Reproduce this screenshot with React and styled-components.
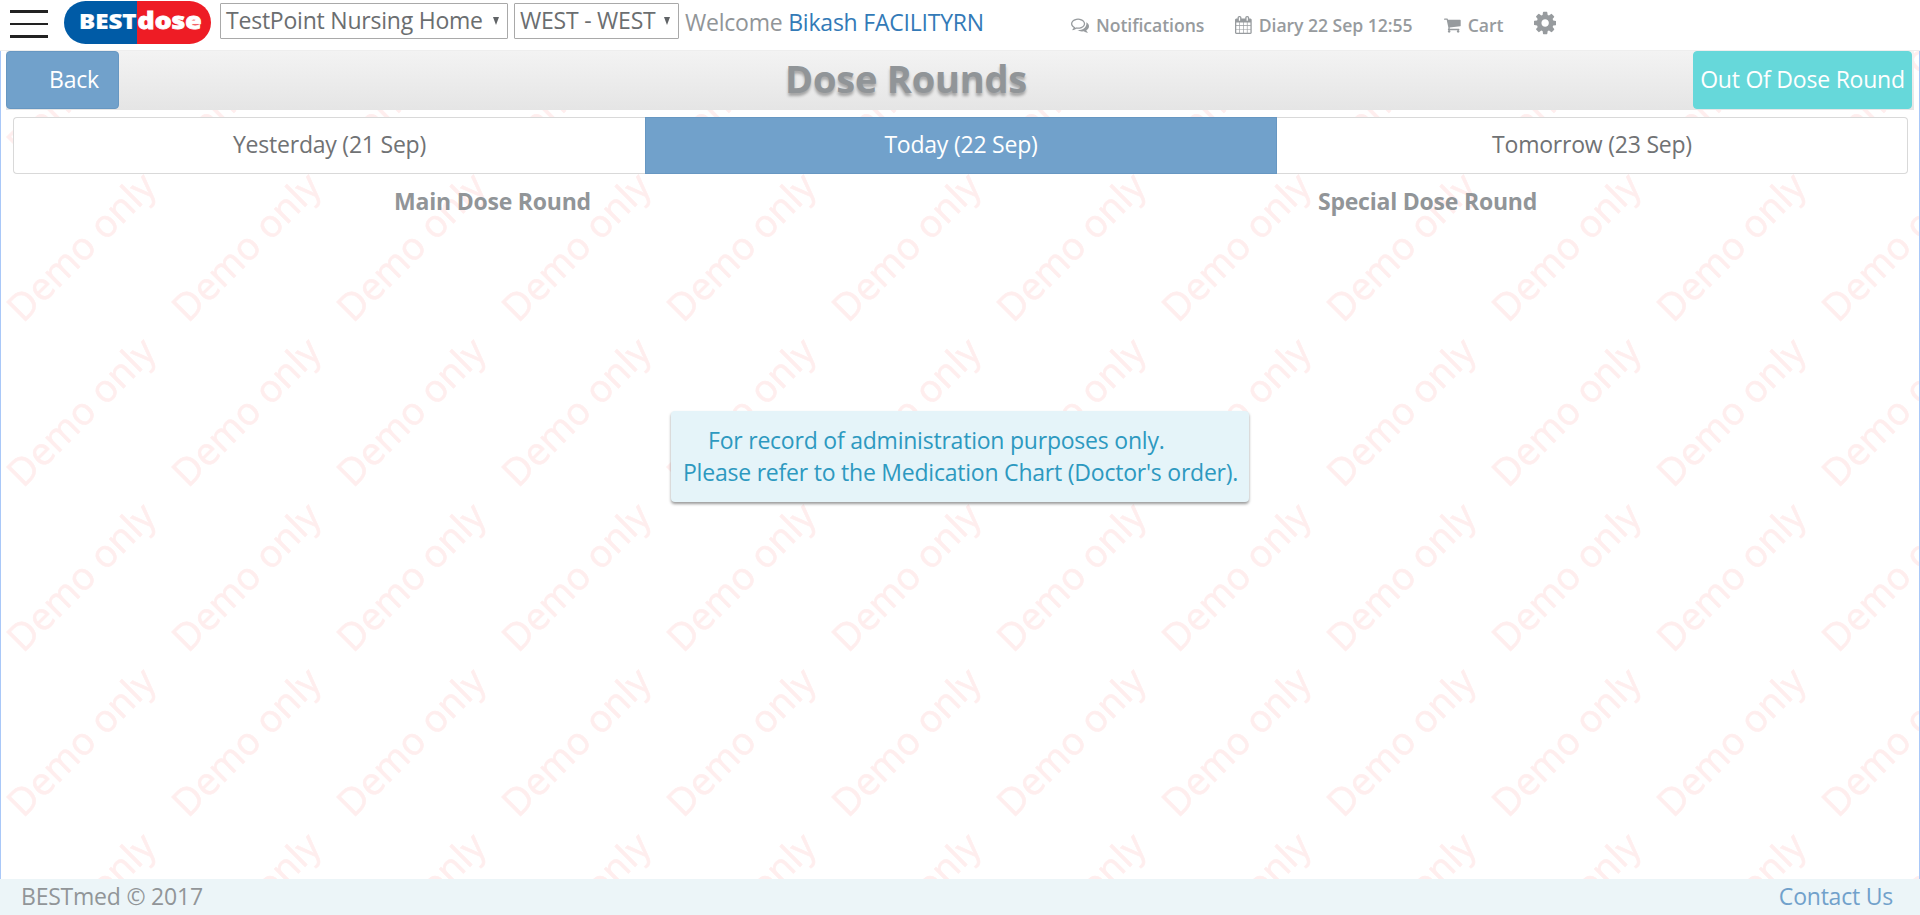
import React from "react";
import styled, { createGlobalStyle } from "styled-components";

const GlobalStyle = createGlobalStyle`
  *, *::before, *::after { box-sizing: border-box; }
  body {
    margin: 0;
    background: #fff;
    color: #919598;
    font: 23px/34px "Open Sans", "Noto Sans", sans-serif;
    letter-spacing: -0.22px;
    overflow: hidden;
  }
`;

const Page = styled.div`
  display: flex;
  flex-direction: column;
  height: 100vh;
`;

const Nav = styled.nav`
  display: flex;
  align-items: flex-start;
  height: 51px;
  flex: none;
  padding-left: 10px;
  background: #fff;
  border-bottom: 1px solid #eee;
`;

const MenuButton = styled.div`
  display: flex;
  flex-direction: column;
  justify-content: space-between;
  width: 38px;
  height: 28px;
  margin: 10px 16px 0 0;
`;

const MenuBar = styled.span`
  height: ${(p) => (p.$thin ? 2 : 3)}px;
  background: #222;
`;

const LogoSvg = styled.svg`
  display: block;
  width: 147px;
  height: 43px;
  margin: 1px 9px 0 0;
  letter-spacing: 0;
`;

const SelectBox = styled.div`
  display: flex;
  align-items: center;
  justify-content: space-between;
  width: ${(p) => p.$width}px;
  height: 36px;
  margin: 3px 6px 0 0;
  padding: 0 8px 2px 5px;
  border: 1px solid #a9a9a9;
  border-radius: 1px;
  color: #6b6e70;
  white-space: nowrap;
`;

const Caret = styled.span`
  width: 0;
  height: 0;
  margin-top: 2px;
  border: solid transparent;
  border-width: 8px 3.5px 0;
  border-top-color: #606366;
`;

const Welcome = styled.div`
  margin: 5px 0 0 0;
  width: 386px;
  white-space: nowrap;
`;

const UserName = styled.a`
  color: #337ab7;
`;

const NavItem = styled.a`
  display: flex;
  align-items: center;
  gap: 7px;
  width: ${(p) => p.$width}px;
  margin-top: 8px;
  font-size: 17.6px;
  font-weight: 600;
  letter-spacing: -0.05px;
  color: #979b9e;
  white-space: nowrap;
`;

const Glyph = styled.svg`
  flex: none;
  display: block;
  height: ${(p) => p.$size}px;
  fill: currentColor;
`;

const SettingsLink = styled.a`
  margin-top: 10px;
  color: #979b9e;
`;

const Main = styled.main`
  position: relative;
  flex: 1;
  min-height: 0;
  padding: 0 5px;
  border: solid #a9c8f8;
  border-width: 0 1px;
`;

const Watermark = styled.svg`
  position: absolute;
  z-index: -1;
  top: -51px;
  left: -1px;
  width: 1920px;
  height: 879px;
  letter-spacing: 0;
`;

const TitleBar = styled.header`
  display: flex;
  align-items: flex-start;
  height: 59px;
  padding-right: 2px;
  background: linear-gradient(#f3f3f3, #e5e5e5);
`;

const ActionButton = styled.button`
  flex: none;
  width: ${(p) => p.$width}px;
  height: 58px;
  padding: 0 0 2px ${(p) => p.$indent ?? 0}px;
  border: 1px solid ${(p) => p.$edge};
  border-radius: 4px;
  background: ${(p) => p.$fill};
  color: #fff;
  font: inherit;
  letter-spacing: inherit;
  white-space: nowrap;
`;

const Title = styled.h1`
  flex: 1;
  margin: 0;
  font-size: 38px;
  line-height: 54px;
  font-weight: 700;
  text-align: center;
  text-shadow: 0 3px 3px rgba(0, 0, 0, 0.3);
`;

const Tabs = styled.div`
  display: grid;
  grid-template-columns: 632px 632px 1fr;
  height: 57px;
  margin: 7px 6px 0 7px;
`;

const Tab = styled.div`
  border: 1px solid ${(p) => (p.$active ? "#6797c2" : "#d9d9d9")};
  border-left-width: ${(p) => (p.$first || p.$active ? 1 : 0)}px;
  border-right-width: ${(p) => (p.$first ? 0 : 1)}px;
  border-radius: ${(p) => (p.$first ? "4px 0 0 4px" : p.$last ? "0 4px 4px 0" : 0)};
  background: ${(p) => (p.$active ? "#71a1cb" : "#fff")};
  color: ${(p) => (p.$active ? "#fff" : "#707274")};
  line-height: 53px;
  text-align: center;
`;

const Rounds = styled.div`
  display: grid;
  grid-template-columns: 1fr 1fr;
  padding: 10px 19px 0;
`;

const RoundHeading = styled.h2`
  margin: 0;
  font-size: 23px;
  line-height: 34px;
  font-weight: 700;
  text-align: center;
`;

const Notice = styled.div`
  position: absolute;
  top: 360px;
  left: 670px;
  width: 578px;
  height: 91px;
  padding: 13px 12px;
  border-radius: 4px;
  background: #e5f4f9;
  box-shadow: 0 2px 3px rgba(0, 0, 0, 0.4);
  color: #2d99c0;
  line-height: 32px;
  white-space: nowrap;
`;

const NoticeLead = styled.div`
  padding-left: 25px;
`;

const Footer = styled.footer`
  display: flex;
  flex: none;
  justify-content: space-between;
  height: 36px;
  padding: 0 27px 0 21px;
  background: #ecf5f8;
`;

const FooterLink = styled.a`
  color: #71a1cb;
`;

const ICONS = {
  comments:
    "M704 384q-153 0-286 52t-211.5 141-78.5 191q0 82 53 158t149 132l97 56-35 84q34-20 62-39l44-31 53 10q78 14 153 14 153 0 286-52t211.5-141 78.5-191-78.5-191-211.5-141-286-52zm0-128q191 0 353.5 68.5t256.5 186.5 94 257-94 257-256.5 186.5-353.5 68.5q-86 0-176-16-124 88-278 128-36 9-86 16h-3q-11 0-20.5-8t-11.5-21q-1-3-1-6.5t.5-6.5 2-6l2.5-5 3.5-5.5 4-5 4.5-5 4-4.5q5-6 23-25t26-29.5 22.5-29 25-38.5 20.5-44q-124-72-195-177t-71-224q0-139 94-257t256.5-186.5 353.5-68.5zm822 1169q10 24 20.5 44t25 38.5 22.5 29 26 29.5 23 25q1 1 4 4.5t4.5 5 4 5 3.5 5.5l2.5 5 2 6 .5 6.5-1 6.5q-3 14-13 22t-22 7q-50-7-86-16-154-40-278-128-90 16-176 16-271 0-472-132 58 4 88 4 161 0 309-45t264-129q125-92 192-212t67-254q0-77-23-152 129 71 204 178t75 230q0 120-71 224.5t-195 176.5z",
  calendar:
    "M192 1664h288v-288h-288v288zm352 0h320v-288h-320v288zm-352-352h288v-320h-288v320zm352 0h320v-320h-320v320zm-352-384h288v-288h-288v288zm736 736h320v-288h-320v288zm-384-736h320v-288h-320v288zm768 736h288v-288h-288v288zm-384-352h320v-320h-320v320zm-352-864v-288q0-13-9.5-22.5t-22.5-9.5h-64q-13 0-22.5 9.5t-9.5 22.5v288q0 13 9.5 22.5t22.5 9.5h64q13 0 22.5-9.5t9.5-22.5zm736 864h288v-320h-288v320zm-384-384h320v-288h-320v288zm384 0h288v-288h-288v288zm32-480v-288q0-13-9.5-22.5t-22.5-9.5h-64q-13 0-22.5 9.5t-9.5 22.5v288q0 13 9.5 22.5t22.5 9.5h64q13 0 22.5-9.5t9.5-22.5zm384-64v1280q0 52-38 90t-90 38h-1408q-52 0-90-38t-38-90v-1280q0-52 38-90t90-38h128v-96q0-66 47-113t113-47h64q66 0 113 47t47 113v96h384v-96q0-66 47-113t113-47h64q66 0 113 47t47 113v96h128q52 0 90 38t38 90z",
  cart:
    "M704 1536q0 52-38 90t-90 38-90-38-38-90 38-90 90-38 90 38 38 90zm896 0q0 52-38 90t-90 38-90-38-38-90 38-90 90-38 90 38 38 90zm128-1088v512q0 24-16.5 42.5t-40.5 21.5l-1044 122q13 60 13 70 0 16-24 64h920q26 0 45 19t19 45-19 45-45 19h-1024q-26 0-45-19t-19-45q0-11 8-31.5t16-36 21.5-40 15.5-29.5l-177-823h-204q-26 0-45-19t-19-45 19-45 45-19h256q16 0 28.5 6.5t19.5 15.5 13 24.5 8 26 5.5 29.5 4.5 26h1201q26 0 45 19t19 45z",
  cog:
    "M1152 896q0-106-75-181t-181-75-181 75-75 181 75 181 181 75 181-75 75-181zm512-109v222q0 12-8 23t-20 13l-185 28q-19 54-39 91 35 50 107 138 10 12 10 25t-9 23q-27 37-99 108t-94 71q-12 0-26-9l-138-108q-44 23-91 38-16 136-29 186-7 28-36 28h-222q-14 0-24.5-8.5t-11.5-21.5l-28-184q-49-16-90-37l-141 107q-10 9-25 9-14 0-25-11-126-114-165-168-7-10-7-23 0-12 8-23 15-21 51-66.5t54-70.5q-27-50-41-99l-183-27q-13-2-21-12.5t-8-23.5v-222q0-12 8-23t19-13l186-28q14-46 39-92-40-57-107-138-10-12-10-24 0-10 9-23 26-36 98.5-107.5t94.5-71.5q13 0 26 10l138 107q44-23 91-38 16-136 29-186 7-28 36-28h222q14 0 24.5 8.5t11.5 21.5l28 184q49 16 90 37l142-107q9-9 24-9 13 0 25 10 129 119 165 170 7 8 7 22 0 12-8 23-15 21-51 66.5t-54 70.5q26 50 41 98l183 28q13 2 21 12.5t8 23.5z",
};

function Icon({ name, size = 18, box = "0 0 1792 1792" }) {
  return (
    <Glyph $size={size} viewBox={box} aria-hidden="true">
      <path d={ICONS[name]} />
    </Glyph>
  );
}

function Logo() {
  return (
    <LogoSvg viewBox="0 0 147 43">
      <clipPath id="pill">
        <rect width="147" height="43" rx="21.5" />
      </clipPath>
      <g clipPath="url(#pill)">
        <rect width="73" height="43" fill="#005ba6" />
        <rect x="73" width="74" height="43" fill="#ee1c25" />
      </g>
      <g fill="#fff" stroke="#fff" fontFamily="Open Sans" fontWeight="800">
        <text x="15" y="28" fontSize="21" strokeWidth="0.2" textLength="57.5" lengthAdjust="spacingAndGlyphs">BEST</text>
        <text x="73.6" y="28" fontSize="23" strokeWidth="0.8" textLength="64" lengthAdjust="spacingAndGlyphs">dose</text>
      </g>
    </LogoSvg>
  );
}

function DemoWatermark() {
  return (
    <Watermark>
      <defs>
        <pattern id="demo" width="165" height="165" patternUnits="userSpaceOnUse">
          <text
            transform="translate(23 158.7) rotate(-45)"
            fontFamily="Open Sans"
            fontSize="37.8"
            fill="#ffeeee"
            stroke="#ffeeee"
            strokeWidth="0.6"
          >
            Demo only
          </text>
        </pattern>
      </defs>
      <rect width="1920" height="879" fill="url(#demo)" />
    </Watermark>
  );
}

export default function App() {
  return (
    <Page>
      <GlobalStyle />
      <Nav>
        <MenuButton>
          <MenuBar />
          <MenuBar $thin />
          <MenuBar />
        </MenuButton>
        <Logo />
        <SelectBox $width={288}>
          TestPoint Nursing Home
          <Caret />
        </SelectBox>
        <SelectBox $width={165}>
          WEST - WEST
          <Caret />
        </SelectBox>
        <Welcome>
          Welcome <UserName>Bikash FACILITYRN</UserName>
        </Welcome>
        <NavItem $width={164}>
          <Icon name="comments" />
          Notifications
        </NavItem>
        <NavItem $width={209}>
          <Icon name="calendar" box="64 0 1664 1792" />
          Diary 22 Sep 12:55
        </NavItem>
        <NavItem $width={90}>
          <Icon name="cart" box="64 0 1664 1792" />
          Cart
        </NavItem>
        <SettingsLink>
          <Icon name="cog" size={26} box="128 0 1536 1792" />
        </SettingsLink>
      </Nav>
      <Main>
        <DemoWatermark />
        <TitleBar>
          <ActionButton $width={113} $indent={23} $fill="#71a1cb" $edge="#6797c2">
            Back
          </ActionButton>
          <Title>Dose Rounds</Title>
          <ActionButton $width={219} $fill="#66d8da" $edge="#66d8da">
            Out Of Dose Round
          </ActionButton>
        </TitleBar>
        <Tabs>
          <Tab $first>Yesterday (21 Sep)</Tab>
          <Tab $active>Today (22 Sep)</Tab>
          <Tab $last>Tomorrow (23 Sep)</Tab>
        </Tabs>
        <Rounds>
          <RoundHeading>Main Dose Round</RoundHeading>
          <RoundHeading>Special Dose Round</RoundHeading>
        </Rounds>
        <Notice>
          <NoticeLead>For record of administration purposes only.</NoticeLead>
          <div>Please refer to the Medication Chart (Doctor's order).</div>
        </Notice>
      </Main>
      <Footer>
        <span>BESTmed © 2017</span>
        <FooterLink>Contact Us</FooterLink>
      </Footer>
    </Page>
  );
}
